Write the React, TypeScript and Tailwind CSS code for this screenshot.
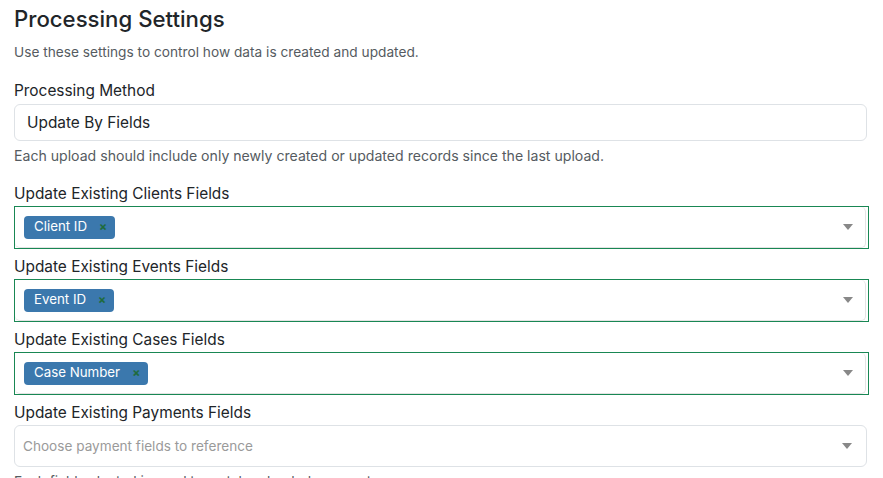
import React from "react";

const font = { fontFamily: "Inter, 'Liberation Sans', sans-serif" };

interface MultiProps {
  label: string;
  chip?: string;
  placeholder?: string;
}

const Caret = () => (
  <svg width="10" height="6" viewBox="0 0 10 6" className="shrink-0">
    <path d="M0 0 L10 0 L5 6 Z" fill="#888888" />
  </svg>
);

const MultiSelect = ({ label, chip, placeholder }: MultiProps) => (
  <div className="mb-[6px]">
    <label className="block text-[15.4px] leading-[24px] text-[#212529]">{label}</label>
    {chip ? (
      <div className="border border-[#198754] h-[43px] flex -mr-[2px]">
        <div className="flex-1 mr-[2px] rounded-[5px] border-r border-b border-[#e3e3e3] flex items-center pl-[9px] pr-[12px]">
          <span className="flex items-center h-[23px] rounded-[4px] bg-[#3b78ad] pl-[10px] pr-[8px] text-[13.3px] text-white">
            {chip}
            <span className="ml-[12px] text-[12px] font-bold text-[#1f6b3c] leading-none">×</span>
          </span>
          <div className="flex-1" />
          <Caret />
        </div>
      </div>
    ) : (
      <div className="h-[42px] rounded-[6px] border border-[#dee2e6] flex items-center pl-[8px] pr-[14px]">
        <span className="flex-1 text-[13.6px] text-[#9a9a9a]">{placeholder}</span>
        <Caret />
      </div>
    )}
  </div>
);

export default function App() {
  return (
    <div style={font} className="bg-white min-h-screen px-[14px] pt-[6px] pr-[16px] text-[#212529]">
      <h1 className="text-[22.2px] leading-[26px] font-medium">Processing Settings</h1>
      <p className="mt-[10px] text-[13.7px] leading-[20px] text-[#555b61]">
        Use these settings to control how data is created and updated.
      </p>

      <div className="mt-[17px]">
        <label className="block text-[15.4px] leading-[24px]">Processing Method</label>
        <div className="mt-[1px] h-[37px] rounded-[6px] border border-[#dee2e6] flex items-center pl-[12px] text-[15.4px]">
          Update By Fields
        </div>
        <p className="mt-[5px] mb-4 text-[14.1px] leading-[20px] text-[#555b61]">
          Each upload should include only newly created or updated records since the last upload.
        </p>
      </div>

      <MultiSelect label="Update Existing Clients Fields" chip="Client ID" />
      <MultiSelect label="Update Existing Events Fields" chip="Event ID" />
      <MultiSelect label="Update Existing Cases Fields" chip="Case Number" />
      <MultiSelect
        label="Update Existing Payments Fields"
        placeholder="Choose payment fields to reference"
      />
      <p className="-mt-[2px] text-[13.7px] leading-[20px] text-[#555b61]">
        Each field selected is used to match uploaded payments.
      </p>
    </div>
  );
}
